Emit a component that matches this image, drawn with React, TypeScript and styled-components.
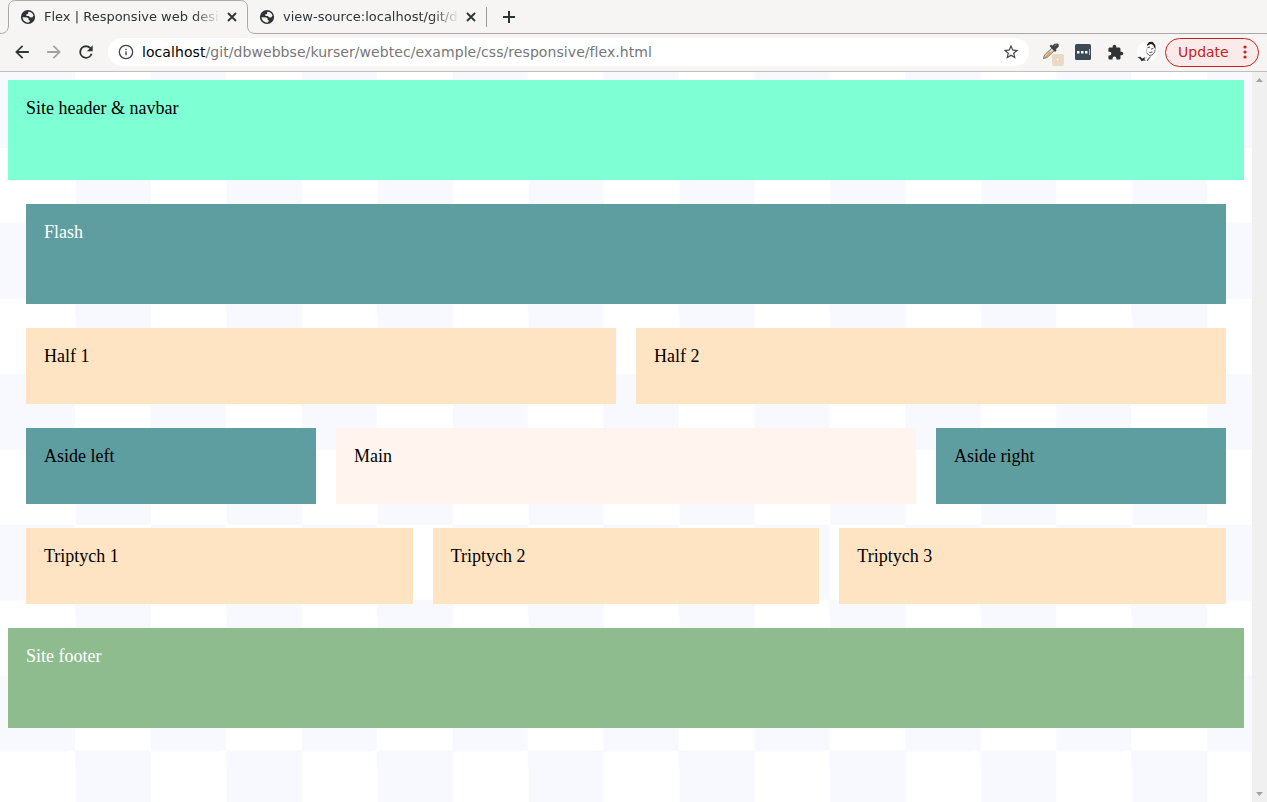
import React from 'react';
import styled, { createGlobalStyle } from 'styled-components';

const GlobalStyle = createGlobalStyle`
  html, body { margin: 0; padding: 0; height: 100%; overflow: hidden; background: #fff; }
  * { box-sizing: border-box; }
`;

const Window = styled.div`
  display: flex;
  flex-direction: column;
  width: 1267px;
  height: 802px;
  font-family: 'DejaVu Sans', sans-serif;
  color: #2e3436;
`;

const TabStrip = styled.div`
  position: relative;
  display: flex;
  align-items: center;
  height: 34px;
  flex: none;
  background: #f6f5f4;
`;

const TabOutline = styled.svg`
  position: absolute;
  left: 0;
  top: 0;
`;

const Tab = styled.div<{ $first?: boolean }>`
  position: relative;
  display: flex;
  align-items: center;
  width: ${(p) => (p.$first ? 247 : 239)}px;
  height: 34px;
  padding-left: ${(p) => (p.$first ? 20 : 12)}px;
`;

const TabTitle = styled.span`
  width: 176px;
  margin-left: 8px;
  white-space: nowrap;
  font-size: 13px;
  line-height: 18px;
  mask-image: linear-gradient(to right, #000 150px, transparent 176px);
`;

const TabClose = styled.svg`
  margin-left: 6px;
`;

const TabDivider = styled.div`
  width: 1px;
  height: 20px;
  background: #9c9c9b;
`;

const NewTab = styled.svg`
  position: relative;
  margin-left: 16px;
`;

const Toolbar = styled.div`
  display: flex;
  align-items: center;
  flex: none;
  height: 38px;
  padding: 0 8px 1px 12px;
  background: #f6f5f4;
  border-bottom: 1px solid #c2bfb8;
`;

const NavIcons = styled.div`
  display: flex;
  gap: 12px;
`;

const AddressBar = styled.div`
  display: flex;
  align-items: center;
  flex: 1;
  height: 28px;
  margin-left: 12px;
  padding: 0 9px 0 10px;
  border-radius: 14px;
  background: #fff;
`;

const Url = styled.div`
  flex: 1;
  margin-left: 8px;
  font-size: 14px;
  line-height: 20px;
  letter-spacing: 0.07px;
  white-space: nowrap;
  color: #777;
`;

const Host = styled.span`
  color: #000;
`;

const Extensions = styled.div`
  display: flex;
  align-items: center;
  gap: 8px;
  margin-left: 10px;
`;

const IconSlot = styled.span`
  display: flex;
  align-items: center;
  justify-content: center;
  width: 24px;
  height: 24px;
`;

const UpdateButton = styled.div`
  display: flex;
  align-items: center;
  justify-content: space-between;
  width: 94px;
  height: 29px;
  margin-left: 6px;
  padding: 0 11px 0 12px;
  border: 1px solid #c5221f;
  border-radius: 15px;
  background: #faebea;
  color: #c5221f;
  font-size: 14px;
`;

const Viewport = styled.div`
  display: flex;
  flex: 1;
`;

const Page = styled.main`
  flex: 1;
  padding: 8px;
  font-family: 'Liberation Serif', 'Times New Roman', serif;
  font-size: 18px;
  line-height: 20px;
  color: #000;
  background: repeating-conic-gradient(#fff 0 25%, #f8f8ff 0 50%) 0 0 / 150.92px 150.92px;
`;

const Content = styled.div`
  display: flex;
  flex-direction: column;
  gap: 24px;
  padding: 24px 18px;
`;

const Row = styled.div`
  display: flex;
  gap: 20px;
`;

const Region = styled.section<{ $bg: string; $color?: string; $tall?: boolean; $width?: string }>`
  flex: ${(p) => (p.$width ? `0 0 ${p.$width}` : '1 1 0')};
  height: ${(p) => (p.$tall ? 100 : 76)}px;
  padding: 18px;
  background: ${(p) => p.$bg};
  color: ${(p) => p.$color ?? '#000'};
`;

const Scrollbar = styled.div`
  display: flex;
  flex-direction: column;
  align-items: center;
  justify-content: space-between;
  width: 15px;
  padding: 6px 0;
  background: #f0f0f0;
`;

const Glyph = ({ d, size, color = '#2e3436' }: { d: string; size: number; color?: string }) => (
  <svg width={size} height={size} viewBox="0 0 24 24" fill={color}>
    <path d={d} />
  </svg>
);

const BACK = 'M20.2 10.8H7.83l5.59-5.39L12 3.8 3.8 12l8.2 8.2 1.5-1.6-5.67-5.4H20.2z';
const FORWARD = 'M3.8 10.8h12.37l-5.59-5.39L12 3.8l8.2 8.2-8.2 8.2-1.5-1.6 5.67-5.4H3.8z';
const RELOAD =
  'M17.65 6.35A7.96 7.96 0 0 0 12 4a8 8 0 1 0 7.73 10h-2.28A5.8 5.8 0 1 1 12 6.2c1.66 0 3.14.69 4.22 1.78L13 11h7V4z';
const INFO =
  'M11 7h2v2h-2zm0 4h2v6h-2zm1-10a11 11 0 1 0 0 22 11 11 0 0 0 0-22zm0 20a9 9 0 1 1 0-18 9 9 0 0 1 0 18z';
const STAR =
  'M22 9.24l-7.19-.62L12 2 9.19 8.63 2 9.24l5.46 4.73L5.82 21 12 17.27 18.18 21l-1.63-7.03zM12 15.4l-3.76 2.27 1-4.28-3.32-2.88 4.38-.38L12 6.1l1.71 4.04 4.38.38-3.32 2.88 1 4.28z';
const PUZZLE =
  'M20.5 11H19V7c0-1.1-.9-2-2-2h-4V3.5a2.5 2.5 0 0 0-5 0V5H4c-1.1 0-2 .9-2 2v3.8h1.5a2.7 2.7 0 0 1 0 5.4H2V20c0 1.1.9 2 2 2h3.8v-1.5a2.7 2.7 0 0 1 5.4 0V22H17c1.1 0 2-.9 2-2v-4h1.5a2.5 2.5 0 0 0 0-5z';

const Favicon = () => (
  <svg width="16" height="16" viewBox="0 0 16 16">
    <circle cx="8" cy="8" r="7.1" fill="#2e3436" />
    <path
      d="M8.3 2.7c2.5 0 4.6 1.5 5.2 3.9l-1.3 1.8-2.3-.2-1-1.2-2.4-.1-.4-1.4 1.9-.6zM2.6 8.2l4.7.2 1.5 1.3-.3 1.3 1.7.7-1.5 1.7c-3.2.4-5.9-2-6.1-5.2z"
      fill="#f6f5f4"
    />
  </svg>
);

const CloseIcon = () => (
  <TabClose width="12" height="12" viewBox="0 0 12 12" stroke="#2e3436" strokeWidth="1.8">
    <path d="M2 2l8 8M10 2l-8 8" />
  </TabClose>
);

const Picker = () => (
  <svg width="24" height="24" viewBox="0 0 24 24">
    <path d="M4.5 18.5l1-3.5 7.5-7 2.5 2.5-7.5 7z" fill="#d9d5cf" stroke="#77736e" strokeWidth="1" />
    <path d="M6 16.5l5-5 1.5 1-5 5z" fill="#e8a33d" />
    <path d="M10.5 6l1.5-1.3 1.5.8 2-1.8 3-.2 1.3 1-.3 2.5-2.5 2 .5 1.5-1.5 1.5z" fill="#3f4244" />
    <path d="M15.5 6l2-1.5" stroke="#8d9294" />
    <rect x="13" y="14" width="12" height="12" rx="2" fill="#e8dac4" />
    <rect x="18" y="19" width="1.2" height="1.2" fill="#fff" />
  </svg>
);

const PickerSlot = styled(IconSlot)`
  svg {
    overflow: visible;
  }
`;

const DotsExtension = () => (
  <svg width="24" height="24" viewBox="0 0 24 24">
    <rect x="4" y="4" width="16" height="16" rx="1.5" fill="#3b4a54" />
    <path d="M6 11h2.5v2.5H6zM10 11h2.5v2.5H10zM14 11h2.5v2.5H14z" fill="#fff" />
    <path d="M18.5 9v6" stroke="#b4bbc0" />
  </svg>
);

const Avatar = () => (
  <svg width="24" height="24" viewBox="0 0 24 24">
    <circle cx="12" cy="12" r="10.5" fill="#fcfcfc" />
    <path d="M12 4.5l2-2.5 3.5-.3 2.7 3.3.5 4-1.5-1.5-1.2-2.5-2-1-2 .8-1.5 1.2z" fill="#202020" />
    <path d="M12.5 7.8l2.5-.8M16 9l2.5-.5M14.5 12.5l3-.5" stroke="#555" strokeWidth="1.1" />
    <path d="M20 9.5c0 3-1.5 4.5-3 5.5l-3 .5M11.5 13l2.5 2" fill="none" stroke="#666" strokeWidth="1" />
    <path d="M2.5 17l3-.2 1.5 1.7 3-1.2-.5 2 1.5 1.5-2-.3-2.5.8-1.2-2z" fill="#333" />
    <path d="M12 20l3-3.5 1-.3-2 3-1.7 2z" fill="#444" />
    <path d="M12 8l-1 5M10 17l2 1" fill="none" stroke="#bbb" strokeWidth=".8" />
  </svg>
);

export default function App() {
  return (
    <Window>
      <GlobalStyle />
      <TabStrip>
        <TabOutline width="1267" height="34" fill="none" stroke="#aaa9a7">
          <path d="M0 33.5C5 33.5 8.5 31 8.5 25V8C8.5 3 11 .5 16 .5H240C245 .5 247.5 3 247.5 8V25C247.5 31 250 33.5 256 33.5H1267" />
        </TabOutline>
        <Tab $first>
          <Favicon />
          <TabTitle>Flex | Responsive web desi</TabTitle>
          <CloseIcon />
        </Tab>
        <Tab>
          <Favicon />
          <TabTitle>view-source:localhost/git/d</TabTitle>
          <CloseIcon />
        </Tab>
        <TabDivider />
        <NewTab width="12" height="12" viewBox="0 0 12 12" stroke="#2e3436" strokeWidth="2">
          <path d="M6 0v12M0 6h12" />
        </NewTab>
      </TabStrip>
      <Toolbar>
        <NavIcons>
          <Glyph d={BACK} size={20} />
          <Glyph d={FORWARD} size={20} color="#a0a1a0" />
          <Glyph d={RELOAD} size={20} />
        </NavIcons>
        <AddressBar>
          <Glyph d={INFO} size={16} color="#444" />
          <Url>
            <Host>localhost</Host>/git/dbwebbse/kurser/webtec/example/css/responsive/flex.html
          </Url>
          <Glyph d={STAR} size={18} color="#444" />
        </AddressBar>
        <Extensions>
          <PickerSlot>
            <Picker />
          </PickerSlot>
          <DotsExtension />
          <IconSlot>
            <Glyph d={PUZZLE} size={17} />
          </IconSlot>
          <Avatar />
        </Extensions>
        <UpdateButton>
          Update
          <svg width="4" height="14" viewBox="0 0 4 14" fill="#c5221f">
            <circle cx="2" cy="2" r="1.6" />
            <circle cx="2" cy="7" r="1.6" />
            <circle cx="2" cy="12" r="1.6" />
          </svg>
        </UpdateButton>
      </Toolbar>
      <Viewport>
        <Page>
          <Region as="header" $tall $bg="#7fffd4">Site header &amp; navbar</Region>
          <Content>
            <Row>
              <Region $tall $bg="#5f9ea0" $color="#fff">Flash</Region>
            </Row>
            <Row>
              <Region $bg="#ffe4c4">Half 1</Region>
              <Region $bg="#ffe4c4">Half 2</Region>
            </Row>
            <Row>
              <Region as="aside" $bg="#5f9ea0" $width="290px">Aside left</Region>
              <Region $bg="#fff5ee">Main</Region>
              <Region as="aside" $bg="#5f9ea0" $width="290px">Aside right</Region>
            </Row>
            <Row>
              <Region $bg="#ffe4c4">Triptych 1</Region>
              <Region $bg="#ffe4c4">Triptych 2</Region>
              <Region $bg="#ffe4c4">Triptych 3</Region>
            </Row>
          </Content>
          <Region as="footer" $tall $bg="#8fbc8f" $color="#fff">Site footer</Region>
        </Page>
        <Scrollbar>
          <svg width="7" height="4" viewBox="0 0 7 4" fill="#a3a3a3"><path d="M0 4L3.5 0 7 4z" /></svg>
          <svg width="7" height="4" viewBox="0 0 7 4" fill="#a3a3a3"><path d="M0 0h7L3.5 4z" /></svg>
        </Scrollbar>
      </Viewport>
    </Window>
  );
}
